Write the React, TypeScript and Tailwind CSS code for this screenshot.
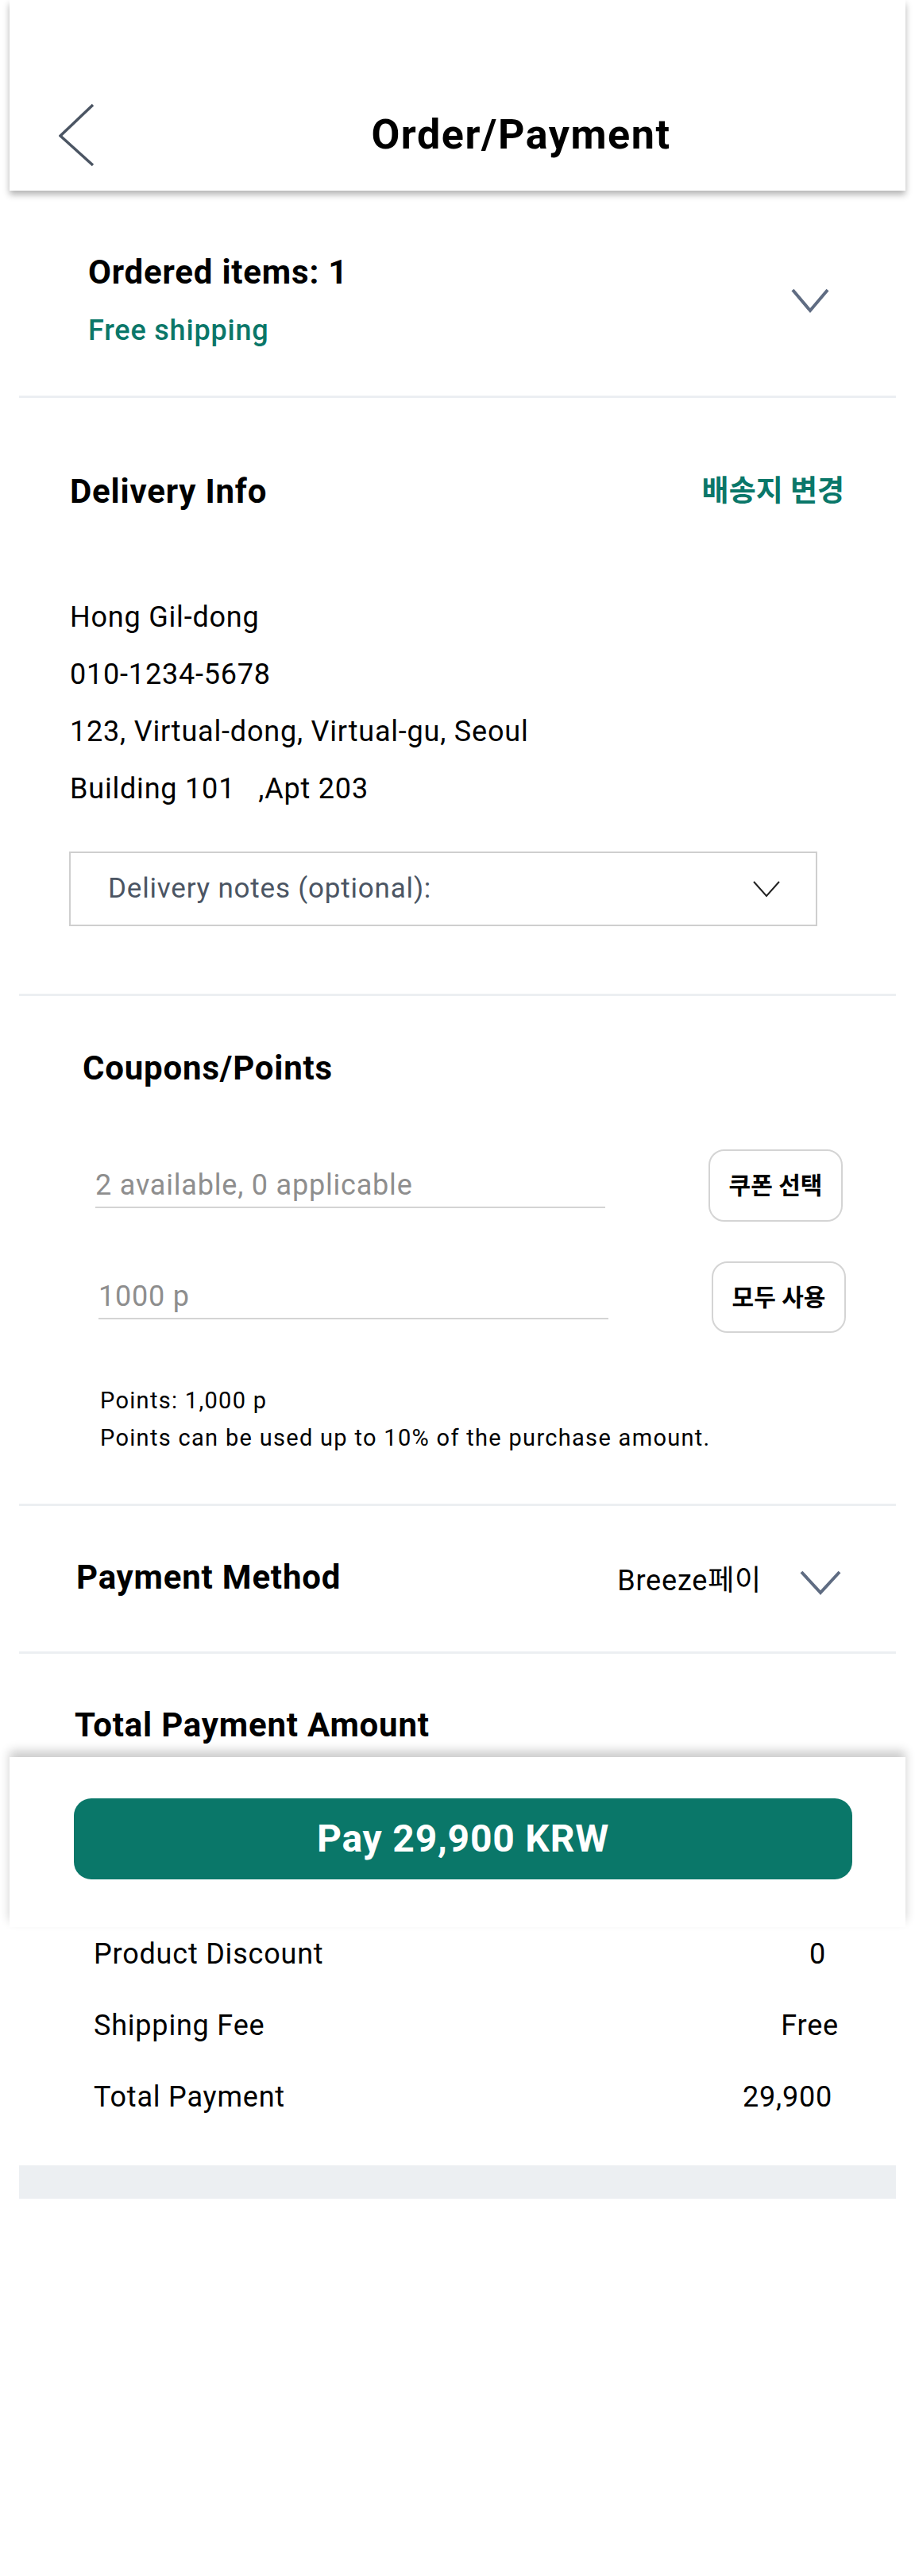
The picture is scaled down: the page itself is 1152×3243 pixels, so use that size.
import React from 'react';

function ChevronDown({ w, h, stroke, className }: { w: number; h: number; stroke: number; className?: string }) {
  return (
    <svg width={w} height={h} viewBox={`0 0 ${w} ${h}`} fill="none" className={className}>
      <polyline
        points={`${stroke},${stroke} ${w / 2},${h - stroke} ${w - stroke},${stroke}`}
        stroke="currentColor"
        strokeWidth={stroke}
      />
    </svg>
  );
}

function Divider() {
  return <div className="h-[3px] bg-[#eceff2]" />;
}

const summary = [
  { label: 'Product Discount', value: '0', pr: 'pr-[88px]' },
  { label: 'Shipping Fee', value: 'Free', pr: 'pr-[72px]' },
  { label: 'Total Payment', value: '29,900', pr: 'pr-[80px]' },
];

export default function App() {
  return (
    <div className="min-h-[3243px] bg-white px-[12px] font-['Roboto','Noto_Sans_CJK_KR',sans-serif] tracking-[0.05em] text-black">
      {/* top bar */}
      <header className="relative z-10 flex h-[240px] items-center bg-white pt-[100px] shadow-[0_5px_8px_rgba(0,0,0,0.3)]">
        <button className="w-[160px] pl-[62px] text-[#4b5563]">
          <svg width="46" height="80" viewBox="0 0 46 80" fill="none">
            <polyline points="43,2 2,41 43,78" stroke="currentColor" strokeWidth="3.5" />
          </svg>
        </button>
        <h1 className="flex-1 text-center text-[52px] font-bold leading-[60px] tracking-[0.03em]">Order/Payment</h1>
      </header>

      <div className="px-[12px]">
        {/* ordered items */}
        <section className="flex items-center justify-between pb-[61px] pl-[87px] pr-[82px] pt-[79px]">
          <div>
            <h2 className="text-[42px] font-bold leading-[48px]">Ordered items: 1</h2>
            <p className="mt-[28px] text-[36px] font-medium leading-[42px] text-[#0a7769]">Free shipping</p>
          </div>
          <ChevronDown w={52} h={34} stroke={4} className="text-[#5f6c82]" />
        </section>
        <Divider />

        {/* delivery */}
        <section className="pb-[85px] pl-[64px] pr-[65px] pt-[94px]">
          <div className="flex h-[48px] items-center justify-between">
            <h2 className="text-[42px] font-bold leading-[48px]">Delivery Info</h2>
            <button className="text-[37px] font-semibold leading-[48px] tracking-normal text-[#0a7769]">배송지 변경</button>
          </div>
          <div className="mt-[98px] text-[36px] leading-[72px]">
            <p>Hong Gil-dong</p>
            <p>010-1234-5678</p>
            <p>123, Virtual-dong, Virtual-gu, Seoul</p>
            <p>Building 101&nbsp;&nbsp;&nbsp;,Apt 203</p>
          </div>
          <div className="-ml-[1px] mt-[43px] flex h-[94px] w-[942px] items-center justify-between border-2 border-[#cfcfcf] pl-[47px] pr-[44px]">
            <span className="text-[35px] text-[#4b5563]">Delivery notes (optional):</span>
            <ChevronDown w={36} h={22} stroke={2} className="text-[#222]" />
          </div>
        </section>
        <Divider />

        {/* coupons / points */}
        <section className="pb-[59px] pt-[67px]">
          <h2 className="pl-[80px] text-[42px] font-bold leading-[48px]">Coupons/Points</h2>
          <div className="mt-[78px] flex h-[91px] items-center pl-[96px]">
            <input
              className="h-[56px] w-[642px] border-b-2 border-[#d4d4d4] text-[36px] outline-none placeholder:text-[#8e8e8e]"
              placeholder="2 available, 0 applicable"
            />
            <button className="ml-[130px] h-[91px] w-[169px] rounded-[20px] border-2 border-[#d4d4d4] text-[30px] font-bold tracking-normal">
              쿠폰 선택
            </button>
          </div>
          <div className="mt-[50px] flex h-[90px] items-center pl-[100px]">
            <input
              className="h-[56px] w-[642px] border-b-2 border-[#d4d4d4] text-[36px] outline-none placeholder:text-[#8e8e8e]"
              placeholder="1000 p"
            />
            <button className="ml-[130px] h-[90px] w-[169px] rounded-[20px] border-2 border-[#d4d4d4] text-[30px] font-bold tracking-normal">
              모두 사용
            </button>
          </div>
          <div className="mt-[62px] pl-[102px] text-[29px] leading-[47px] tracking-[0.045em]">
            <p>Points: 1,000 p</p>
            <p>Points can be used up to 10% of the purchase amount.</p>
          </div>
        </section>
        <Divider />

        {/* payment method */}
        <section className="flex items-center justify-between pb-[69px] pl-[72px] pr-[67px] pt-[66px]">
          <h2 className="text-[42px] font-bold leading-[48px]">Payment Method</h2>
          <div className="flex items-center gap-[46px]">
            <span className="translate-y-[4px] text-[36px] leading-[48px]">Breeze페이</span>
            <ChevronDown w={56} h={34} stroke={4} className="translate-y-[6px] text-[#5f6c82]" />
          </div>
        </section>
        <Divider />

        <h2 className="pl-[70px] pt-[66px] text-[42px] font-bold leading-[48px]">Total Payment Amount</h2>
      </div>

      {/* pay bar */}
      <div className="relative z-10 mt-[16px] bg-white pb-[60px] pl-[81px] pt-[52px] shadow-[0_-8px_12px_rgba(0,0,0,0.2)]">
        <button className="h-[102px] w-[980px] rounded-[22px] bg-[#0a7769] text-[48px] font-bold text-white">
          Pay 29,900 KRW
        </button>
      </div>

      <div className="px-[12px]">
        <div className="mt-[10px] flex flex-col gap-[42px]">
          {summary.map((row) => (
            <div key={row.label} className={`flex justify-between pl-[94px] text-[36px] leading-[48px] ${row.pr}`}>
              <span>{row.label}</span>
              <span>{row.value}</span>
            </div>
          ))}
        </div>
        <div className="mt-[62px] h-[42px] bg-[#eceff2]" />
      </div>
    </div>
  );
}
